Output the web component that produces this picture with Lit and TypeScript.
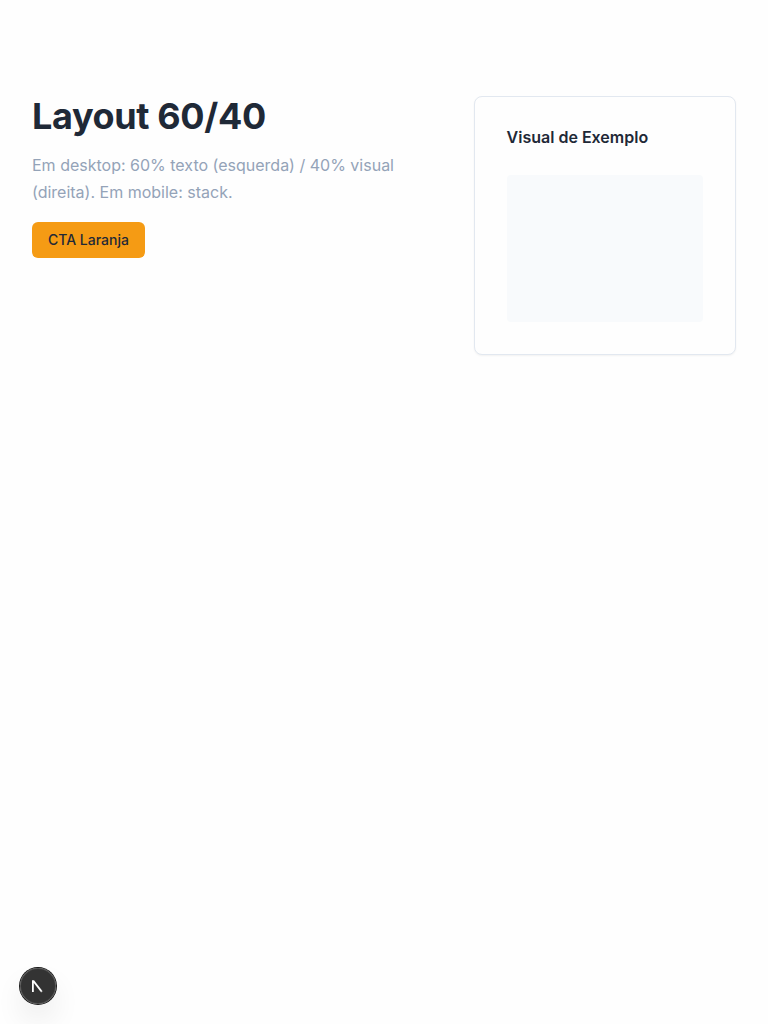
import { LitElement, html, css } from "lit";
import { customElement } from "lit/decorators.js";

@customElement("app-root")
export class AppRoot extends LitElement {
  static styles = css`
    :host {
      display: block;
      min-height: 100vh;
      box-sizing: border-box;
      background: #fefefe;
      color: #1f2937;
      font-family: Inter, sans-serif;
      font-size: 16px;
      line-height: 24px;
    }
    * {
      box-sizing: border-box;
    }
    .section {
      padding: 96px 32px;
      display: grid;
      grid-template-columns: 3fr 2fr;
      gap: 48px;
      align-items: start;
    }
    h1 {
      margin: 0 0 16px;
      font-size: 36px;
      line-height: 40px;
      font-weight: 700;
      letter-spacing: -0.01em;
    }
    .lead {
      margin: 0 0 16px;
      color: #94a3b8;
      line-height: 27px;
    }
    .cta {
      display: inline-flex;
      align-items: center;
      height: 36px;
      padding: 0 16px;
      border: 0;
      border-radius: 6px;
      background: #f59b14;
      color: #1f2937;
      font: 500 14px/20px Inter, sans-serif;
    }
    .card {
      padding: 32px;
      border: 1px solid #e2e8f0;
      border-radius: 8px;
      background: #fefefe;
      box-shadow: 0 1px 2px rgba(0, 0, 0, 0.05);
    }
    .title {
      margin: 0 0 30px;
      font-size: 16px;
      line-height: 16px;
      font-weight: 600;
    }
    .visual {
      aspect-ratio: 4 / 3;
      border-radius: 4px;
      background: #f8fafc;
    }
    .badge {
      position: fixed;
      left: 20px;
      bottom: 20px;
      width: 36px;
      height: 36px;
      border-radius: 50%;
      background: rgba(0, 0, 0, 0.8);
      box-shadow: 0 0 0 1px #171717, inset 0 0 0 1px rgba(255, 255, 255, 0.14), 0 16px 32px -8px rgba(0, 0, 0, 0.24);
      display: grid;
      place-content: center;
    }
  `;

  render() {
    return html`
      <main class="section">
        <div>
          <h1>Layout 60/40</h1>
          <p class="lead">Em desktop: 60% texto (esquerda) / 40% visual (direita). Em mobile: stack.</p>
          <button class="cta">CTA Laranja</button>
        </div>
        <aside class="card">
          <h2 class="title">Visual de Exemplo</h2>
          <div class="visual"></div>
        </aside>
      </main>
      <div class="badge">
        <svg width="40" height="40" viewBox="0 0 40 40" fill="none">
          <defs>
            <linearGradient id="a" x1="18" y1="17" x2="25" y2="27" gradientUnits="userSpaceOnUse">
              <stop stop-color="#fff" />
              <stop offset="0.7" stop-color="#fff" />
              <stop offset="1" stop-color="#fff" stop-opacity="0.5" />
            </linearGradient>
          </defs>
          <path d="M14.9 26V15.1h.7l8.3 10.8" stroke="url(#a)" stroke-width="1.8" />
        </svg>
      </div>
    `;
  }
}
